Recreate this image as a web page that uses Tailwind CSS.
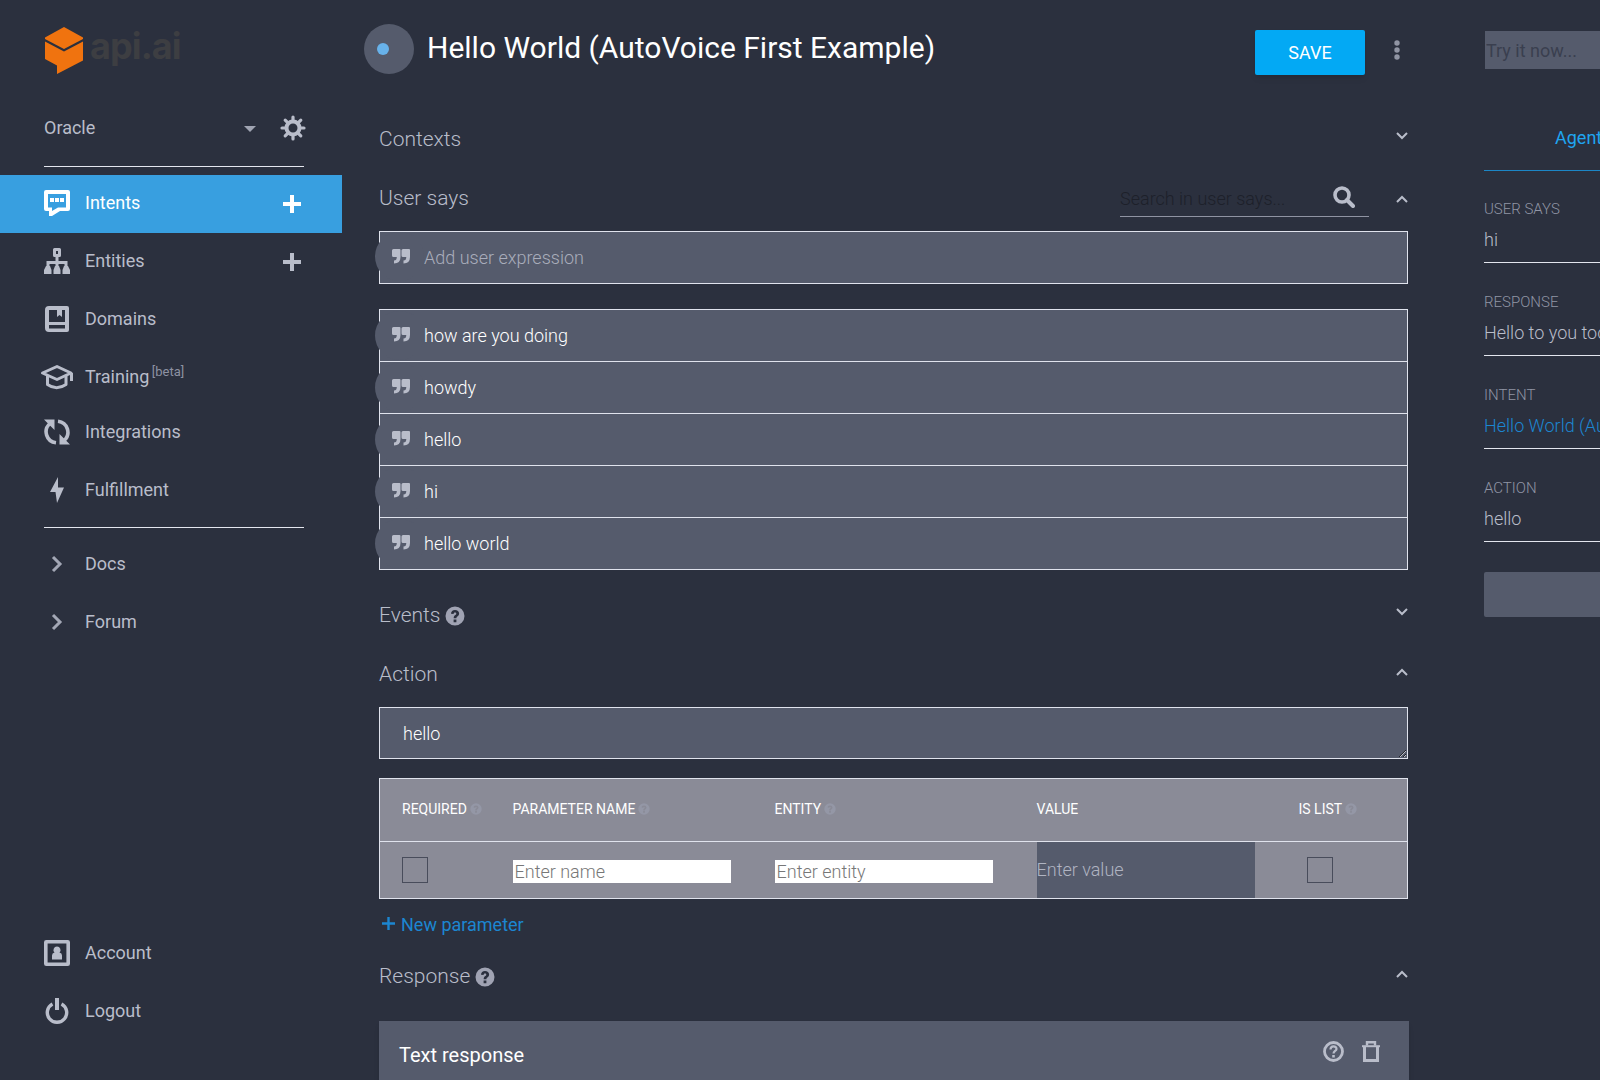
<!DOCTYPE html>
<html lang="en">
<head>
  <meta charset="UTF-8" />
  <meta name="viewport" content="width=device-width, initial-scale=1.0" />
  <title>api.ai - Hello World (AutoVoice First Example)</title>
  <script src="https://cdn.jsdelivr.net/npm/@tailwindcss/browser@4"></script>
</head>
<body class="bg-[#2b303e] text-[#b9bdca] font-['Roboto',sans-serif] text-lg">

  <!-- shared icons -->
  <svg class="hidden">
    <symbol id="plus" viewBox="0 0 20 20"><path d="M8 1h4v7h7v4h-7v7H8v-7H1V8h7z" fill="currentColor"/></symbol>
    <symbol id="down" viewBox="0 0 12 8"><path d="M1 1l5 5 5-5" fill="none" stroke="currentColor" stroke-width="2"/></symbol>
    <symbol id="up" viewBox="0 0 12 8"><path d="M1 7l5-5 5 5" fill="none" stroke="currentColor" stroke-width="2"/></symbol>
    <symbol id="right" viewBox="0 0 12 18"><path d="M2 2l7 7-7 7" fill="none" stroke="currentColor" stroke-width="3"/></symbol>
    <symbol id="quote" viewBox="0 0 18 15"><path d="M1.500 0H7.500Q8.500 0 8.500 1V8Q8.500 14.500 2 14.500V11.500Q4.800 11.500 4.800 8H1.500Q0 8 0 6.500V1.500Q0 0 1.500 0zM11 0H17Q18 0 18 1V8Q18 14.500 11.500 14.500V11.500Q14.300 11.500 14.300 8H11Q9.500 8 9.500 6.500V1.500Q9.500 0 11 0z" fill="currentColor"/></symbol>
    <symbol id="help" viewBox="0 0 20 20"><path fill-rule="evenodd" d="M10 .5a9.500 9.500 0 1 0 0 19a9.500 9.500 0 0 0 0-19zM8.600 13.500h2.800v2.700H8.600zM6 7.700C6 5.400 7.600 4 10 4s4.100 1.300 4.100 3.500c0 1.500-.8 2.300-1.700 3c-.7.500-1 .8-1 1.800H8.700c0-1.800.6-2.500 1.600-3.200c.7-.5 1-.8 1-1.400c0-.7-.5-1.100-1.200-1.100c-.9 0-1.400.5-1.500 1.400z" fill="currentColor"/></symbol>
  </svg>

  <div class="flex h-screen overflow-hidden">

    <aside class="flex w-[342px] shrink-0 flex-col pb-10">
      <div class="flex items-center gap-[6px] pt-[26px] pl-11">
        <svg class="h-[48px] w-[40px]" viewBox="0 0 40 48" aria-hidden="true">
          <path d="M20 1L39 11.500V13L20 23L1 13V11.500z" fill="#f0730f"/>
          <path d="M1 15.500L20 25.500L39 15.500V34.500L13 48V39.500L1 33z" fill="#f0730f"/>
        </svg>
        <span class="pb-2 font-['Inter'] text-[36px] leading-10 font-bold tracking-tight text-[#3d3e42]">api.ai</span>
      </div>

      <div class="mx-[38px] ml-11 mt-[26px] flex h-[67px] items-center justify-between border-b border-[#e4e6ee] pb-[10px]">
        <div class="relative w-[212px]">
          <select aria-label="Agent" class="w-full appearance-none bg-transparent pr-6">
            <option>Oracle</option>
          </select>
          <svg class="pointer-events-none absolute right-0 top-3 h-[6px] w-3 text-[#a0a4b2]" viewBox="0 0 12 6"><path d="M0 0h12L6 6z" fill="currentColor"/></svg>
        </div>
        <button aria-label="Agent settings" class="-mr-[2px]">
          <svg class="size-[26px]" viewBox="0 0 26 26" fill="none" stroke="currentColor">
            <circle cx="13" cy="13" r="6.500" stroke-width="4"/>
            <path d="M13 2v4M13 20v4M2 13h4M20 13h4M5.200 5.200l3 3M17.800 17.800l3 3M5.200 20.800l3-3M17.800 8.200l3-3" stroke-width="3.200" stroke-linecap="round"/>
          </svg>
        </button>
      </div>

      <nav class="mt-2">
        <div class="flex h-[58px] items-center justify-between bg-[#389fe0] pr-10 pl-11 text-white">
          <a href="#" class="flex items-center gap-[15px] pb-[2px]">
            <svg class="size-[26px]" viewBox="0 0 26 26"><path fill-rule="evenodd" d="M2 0h22a2 2 0 0 1 2 2v17a2 2 0 0 1-2 2h-8L8 26H5v-5H2a2 2 0 0 1-2-2V2a2 2 0 0 1 2-2zM4 4v13.500h4v3.500l6-3.500h8V4z" fill="currentColor"/><path d="M6 8h4v4H6zM11 8h4v4h-4zM16 8h4v4h-4z" fill="currentColor"/></svg>
            Intents
          </a>
          <button aria-label="Create intent"><svg class="size-5"><use href="#plus"/></svg></button>
        </div>
        <div class="flex h-[58px] items-center justify-between pr-10 pl-11">
          <a href="#" class="flex items-center gap-[15px] pb-[2px]">
            <svg class="size-[26px]" viewBox="0 0 26 26"><path d="M10.500 1.500h5v6h-5z" fill="none" stroke="currentColor" stroke-width="3" stroke-linejoin="round"/><path d="M13 9v10M4 19v-4.500h18V19" fill="none" stroke="currentColor" stroke-width="3"/><path d="M2 18h4l1.500 4v4H0v-4zM11 18h4l1.500 4v4h-7v-4zM20 18h4l2 4v4h-7.500v-4z" fill="currentColor"/></svg>
            Entities
          </a>
          <button aria-label="Create entity"><svg class="size-5"><use href="#plus"/></svg></button>
        </div>
        <a href="#" class="flex h-[58px] items-center gap-[15px] pb-[2px] pl-11">
          <svg class="size-[26px]" viewBox="0 0 26 26"><path fill-rule="evenodd" d="M5 0h18a2 2 0 0 1 2 2v22a2 2 0 0 1-2 2H5a4 4 0 0 1-4-4V4a4 4 0 0 1 4-4zM5 4v12h16V4h-3v7l-2.500-2L13 11V4zM5 19v3.500h16V19z" fill="currentColor"/></svg>
          Domains
        </a>
        <a href="#" class="flex h-[55px] items-center gap-3 pl-10">
          <svg class="h-[26px] w-[33px]" viewBox="0 0 33 26" fill="none" stroke="currentColor" stroke-width="3" stroke-linejoin="round"><path d="M2.500 9L17 2.500L31 9L17 15.500z"/><path d="M7.500 12v8.500q9 6.500 18.500 0V12"/><path d="M31.500 9v8"/></svg>
          <span>Training <sup class="-ml-[2px] text-[13px] text-[#8d92a2]">[beta]</sup></span>
        </a>
        <a href="#" class="flex h-[58px] items-center gap-[15px] pb-[2px] pl-11">
          <svg class="size-[26px]" viewBox="0 0 26 26"><path d="M12 23.800A11 11 0 0 1 6 4.500M14 2.200A11 11 0 0 1 20 21.500" fill="none" stroke="currentColor" stroke-width="3.600"/><path d="M0 .5h10.500V11zM26 25.500H15.500V15z" fill="currentColor"/></svg>
          Integrations
        </a>
        <a href="#" class="flex h-[58px] items-center gap-[15px] pb-[2px] pl-11">
          <svg class="size-[26px]" viewBox="0 0 26 26"><path d="M14 0L6 15h5.500L13 26L20 10.500h-6z" fill="currentColor"/></svg>
          Fulfillment
        </a>
      </nav>

      <nav class="mt-[7px]">
        <hr class="mr-[38px] mb-[7px] ml-11 border-[#e4e6ee]" />
        <a href="#" class="flex h-[58px] items-center gap-[15px] pl-11">
          <span class="flex w-[26px] justify-center"><svg class="h-[18px] w-3 text-[#a3a7b5]"><use href="#right"/></svg></span>
          Docs
        </a>
        <a href="#" class="flex h-[58px] items-center gap-[15px] pl-11">
          <span class="flex w-[26px] justify-center"><svg class="h-[18px] w-3 text-[#a3a7b5]"><use href="#right"/></svg></span>
          Forum
        </a>
      </nav>

      <nav class="mt-auto">
        <a href="#" class="flex h-[58px] items-center gap-[15px] pl-11">
          <svg class="size-[26px]" viewBox="0 0 26 26"><rect x="1.800" y="1.800" width="22.400" height="22.400" rx=".5" fill="none" stroke="currentColor" stroke-width="3.600"/><path d="M13 6.500a3.500 3.500 0 0 1 2.500 6q2.500.5 2.500 3V19.500H8V15.500q0-2.500 2.500-3a3.500 3.500 0 0 1 2.500-6z" fill="currentColor"/></svg>
          Account
        </a>
        <a href="#" class="flex h-[58px] items-center gap-[15px] pl-11">
          <svg class="size-[26px]" viewBox="0 0 26 26"><path d="M8.500 6A9.700 9.700 0 1 0 17.500 6" fill="none" stroke="currentColor" stroke-width="3.400"/><path d="M13 0v12" stroke="currentColor" stroke-width="4"/></svg>
          Logout
        </a>
      </nav>
    </aside>

    <main class="min-w-0 flex-1 pt-6 pl-[37px]">
      <header class="-ml-[15px] flex h-[51px] items-center">
        <span class="flex size-[50px] shrink-0 items-center self-start rounded-full bg-[#555b6c] pl-[13px]"><span class="size-3 rounded-full bg-[#68b2ea]"></span></span>
        <h1 class="ml-[13px] flex-1 truncate pb-[3px] text-[30px] leading-9 text-white">Hello World (AutoVoice First Example)</h1>
        <button class="h-[45px] w-[110px] self-end rounded-xs bg-[#03a9f4] text-white shadow-md">SAVE</button>
        <button aria-label="More" class="mx-[29px] mr-2">
          <svg class="h-5 w-[6px] text-[#9094a3]" viewBox="0 0 6 20" fill="currentColor"><circle cx="3" cy="3" r="2.700"/><circle cx="3" cy="10" r="2.700"/><circle cx="3" cy="17" r="2.700"/></svg>
        </button>
      </header>

      <section class="mt-[34px] flex h-[59px] items-center justify-between pt-[2px]">
        <h2 class="text-[21px] font-light">Contexts</h2>
        <button aria-label="Expand contexts" class="pb-2"><svg class="h-2 w-3"><use href="#down"/></svg></button>
      </section>

      <section>
        <div class="mb-1 flex h-[59px] items-center pt-[2px]">
          <h2 class="flex-1 text-[21px] font-light">User says</h2>
          <div class="flex h-[37px] w-[249px] items-center border-b border-[#8f93a2]">
            <input type="text" aria-label="Search in user says" placeholder="Search in user says..." class="w-[213px] pt-[2px] font-light placeholder-[#1d202a] outline-none" />
            <button aria-label="Search" class="pb-[2px]"><svg class="size-[22px]" viewBox="0 0 22 22" fill="none" stroke="currentColor"><circle cx="9" cy="9" r="7" stroke-width="3.600"/><path d="M14 14l6 6" stroke-width="4" stroke-linecap="round"/></svg></button>
          </div>
          <button aria-label="Collapse user says" class="ml-[27px]"><svg class="h-2 w-3"><use href="#up"/></svg></button>
        </div>

        <div class="flex h-[53px] border border-[#e0e3ed] bg-[#555b6c]">
          <span class="-ml-[5px] flex size-[49px] shrink-0 items-center justify-center rounded-full bg-[#555b6c] pl-[2px]"><svg class="h-[15px] w-[18px]"><use href="#quote"/></svg></span>
          <input type="text" aria-label="Add user expression" placeholder="Add user expression" class="min-w-0 flex-1 font-light placeholder-[#a9adbb] outline-none" />
        </div>

        <ul class="mt-[25px] divide-y divide-[#e0e3ed] border border-[#e0e3ed] bg-[#555b6c] font-light text-white">
          <li class="flex h-[52px] items-center">
            <span class="-ml-[5px] flex size-[49px] items-center justify-center rounded-full bg-[#555b6c] pb-[2px] pl-[2px] text-[#b9bdca]"><svg class="h-[15px] w-[18px]"><use href="#quote"/></svg></span>how are you doing
          </li>
          <li class="flex h-[52px] items-center">
            <span class="-ml-[5px] flex size-[49px] items-center justify-center rounded-full bg-[#555b6c] pb-[2px] pl-[2px] text-[#b9bdca]"><svg class="h-[15px] w-[18px]"><use href="#quote"/></svg></span>howdy
          </li>
          <li class="flex h-[52px] items-center">
            <span class="-ml-[5px] flex size-[49px] items-center justify-center rounded-full bg-[#555b6c] pb-[2px] pl-[2px] text-[#b9bdca]"><svg class="h-[15px] w-[18px]"><use href="#quote"/></svg></span>hello
          </li>
          <li class="flex h-[52px] items-center">
            <span class="-ml-[5px] flex size-[49px] items-center justify-center rounded-full bg-[#555b6c] pb-[2px] pl-[2px] text-[#b9bdca]"><svg class="h-[15px] w-[18px]"><use href="#quote"/></svg></span>hi
          </li>
          <li class="flex h-[51px] items-center">
            <span class="-ml-[5px] flex size-[49px] items-center justify-center rounded-full bg-[#555b6c] pb-[2px] pl-[2px] text-[#b9bdca]"><svg class="h-[15px] w-[18px]"><use href="#quote"/></svg></span>hello world
          </li>
        </ul>
      </section>

      <section class="mt-[15px] flex h-[59px] items-center justify-between pt-[2px]">
        <h2 class="flex items-center gap-[5px] text-[21px] font-light">Events <svg class="size-5 text-[#a0a3b3]"><use href="#help"/></svg></h2>
        <button aria-label="Expand events" class="pb-2"><svg class="h-2 w-3"><use href="#down"/></svg></button>
      </section>

      <section>
        <div class="mb-1 flex h-[59px] items-center justify-between pt-[2px]">
          <h2 class="text-[21px] font-light">Action</h2>
          <button aria-label="Collapse action" class="pb-[6px]"><svg class="h-2 w-3"><use href="#up"/></svg></button>
        </div>
        <textarea aria-label="Action" rows="1" class="block h-[52px] w-full overflow-hidden border border-[#e0e3ed] bg-[#555b6c] px-[23px] py-3 font-light text-white outline-none">hello</textarea>

        <table class="mt-[19px] w-full table-fixed border-collapse border border-[#e0e3ed] bg-[#8a8b97]">
          <colgroup><col class="w-[133px]" /><col /><col /><col /><col class="w-[109px]" /></colgroup>
          <thead>
            <tr class="h-[63px] border-b border-[#e0e3ed] text-left text-sm text-white">
              <th class="pb-[2px] pl-[22px] font-normal"><span class="flex items-center gap-[3px]">REQUIRED <svg class="size-3 text-[#9497a6]"><use href="#help"/></svg></span></th>
              <th class="pb-[2px] font-normal"><span class="flex items-center gap-[3px]">PARAMETER NAME <svg class="size-3 text-[#9497a6]"><use href="#help"/></svg></span></th>
              <th class="pb-[2px] font-normal"><span class="flex items-center gap-[3px]">ENTITY <svg class="size-3 text-[#9497a6]"><use href="#help"/></svg></span></th>
              <th class="pb-[2px] font-normal">VALUE</th>
              <th class="pb-[2px] font-normal"><span class="flex items-center gap-[3px]">IS LIST <svg class="size-3 text-[#9497a6]"><use href="#help"/></svg></span></th>
            </tr>
          </thead>
          <tbody>
            <tr class="h-[57px]">
              <td class="pl-[22px]"><input type="checkbox" aria-label="Required" class="block size-[26px] appearance-none border border-[#484c5b]" /></td>
              <td class="pr-11"><input type="text" aria-label="Parameter name" placeholder="Enter name" class="mt-[3px] block h-[23px] w-full bg-white px-[2px] font-light text-black placeholder-[#777777] outline-none" /></td>
              <td class="pr-11"><input type="text" aria-label="Entity" placeholder="Enter entity" class="mt-[3px] block h-[23px] w-full bg-white px-[2px] font-light text-black placeholder-[#777777] outline-none" /></td>
              <td class="pr-11"><input type="text" aria-label="Value" placeholder="Enter value" class="block h-14 w-full bg-[#555b6c] pb-[2px] font-light placeholder-[#b0b4c2] outline-none" /></td>
              <td class="pl-2"><input type="checkbox" aria-label="Is list" class="block size-[26px] appearance-none border border-[#484c5b]" /></td>
            </tr>
          </tbody>
        </table>

        <button class="mt-1 flex h-[43px] items-center gap-[6px] pl-[3px] text-[#1c86d1]"><svg class="mb-[2px] size-[13px]" viewBox="0 0 13 13"><path d="M6.500 0v13M0 6.500h13" stroke="currentColor" stroke-width="2.400"/></svg>New parameter</button>
      </section>

      <section>
        <div class="flex h-[59px] items-center justify-between pt-[2px]">
          <h2 class="flex items-center gap-[5px] text-[21px] font-light">Response <svg class="size-5 text-[#a0a3b3]"><use href="#help"/></svg></h2>
          <button aria-label="Collapse response" class="pb-[6px]"><svg class="h-2 w-3"><use href="#up"/></svg></button>
        </div>
        <div class="mt-4 -mr-px flex h-[200px] items-start bg-[#555b6c] px-[20px] pt-[20px] shadow-md">
          <h3 class="flex-1 text-xl text-white">Text response</h3>
          <button aria-label="Help" class="mr-[18px]"><svg class="size-[21px]" viewBox="0 0 21 21"><circle cx="10.500" cy="10.500" r="9" fill="none" stroke="currentColor" stroke-width="2.800"/><path d="M7.500 8.500c0-4 6-4 6-.6c0 2-3 2.200-3 4.600" fill="none" stroke="currentColor" stroke-width="2.200"/><path d="M9.200 14h2.600v2.500H9.200z" fill="currentColor"/></svg></button>
          <button aria-label="Delete" class="mr-[9px]"><svg class="h-[21px] w-[18px]" viewBox="0 0 18 21" fill="none" stroke="currentColor"><path d="M0 5.200h18" stroke-width="2"/><path d="M5 4.500V1.200h8v3.300" stroke-width="2.400"/><path d="M2.500 5v14.500h13V5" stroke-width="3"/></svg></button>
        </div>
      </section>
    </main>

    <aside class="ml-[76px] w-[116px] shrink-0 overflow-hidden pt-[31px] whitespace-nowrap">
      <input type="text" aria-label="Try it now" placeholder="Try it now..." class="ml-px block h-[38px] w-full bg-[#555b6c] px-px placeholder-[#3a3f4f] outline-none" />
      <div class="mt-[37px] flex h-[65px] items-center border-b border-[#1c86c6] pl-[71px]">
        <a href="#" class="text-[#1fa5f0]">Agent</a>
      </div>
      <dl class="flex flex-col gap-px font-light">
        <div class="border-b border-[#e4e6ee] pt-7">
          <dt class="text-[15px] leading-5 text-[#9095a5]">USER SAYS</dt>
          <dd class="pb-[2px] leading-[41px]">hi</dd>
        </div>
        <div class="border-b border-[#e4e6ee] pt-7">
          <dt class="text-[15px] leading-5 text-[#9095a5]">RESPONSE</dt>
          <dd class="pb-[2px] leading-[41px]">Hello to you too!</dd>
        </div>
        <div class="border-b border-[#e4e6ee] pt-7">
          <dt class="text-[15px] leading-5 text-[#9095a5]">INTENT</dt>
          <dd class="pb-[2px] leading-[41px]"><a href="#" class="text-[#1c86d1]">Hello World (AutoVoice First Example)</a></dd>
        </div>
        <div class="border-b border-[#e4e6ee] pt-7">
          <dt class="text-[15px] leading-5 text-[#9095a5]">ACTION</dt>
          <dd class="pb-[2px] leading-[41px]">hello</dd>
        </div>
      </dl>
      <button aria-label="Show JSON" class="mt-[30px] block h-[45px] w-full rounded-l-xs bg-[#555b6c]"></button>
    </aside>

  </div>
</body>
</html>
